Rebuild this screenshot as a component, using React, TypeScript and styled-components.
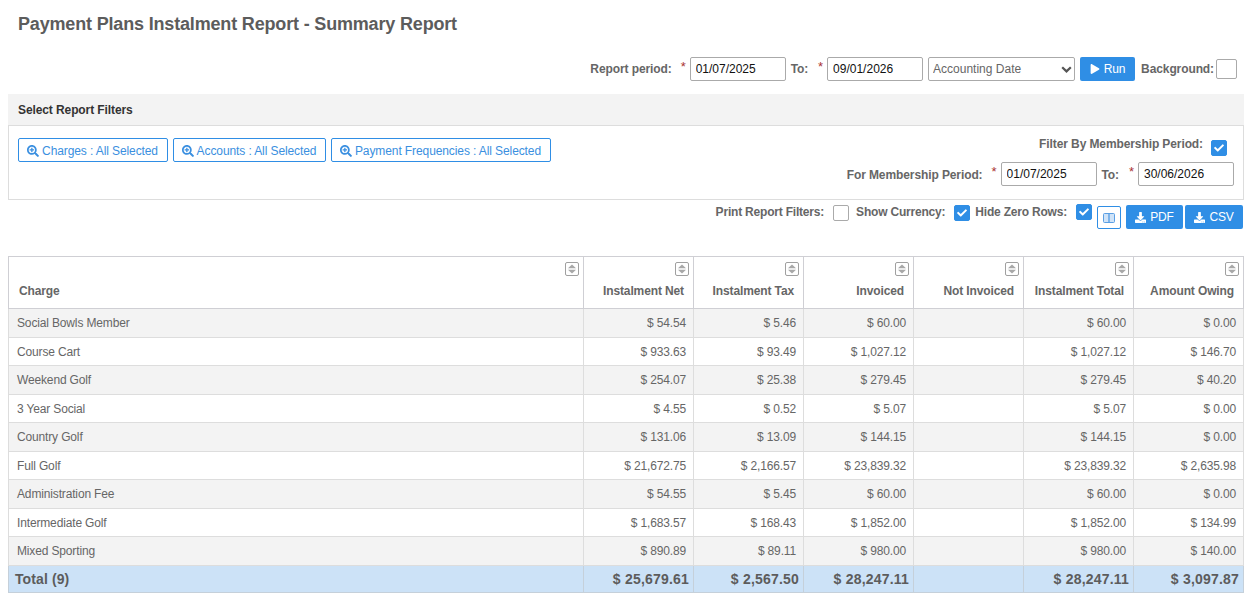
import React from 'react';
import styled, { createGlobalStyle } from 'styled-components';
import { FaSearchPlus, FaPlay, FaDownload, FaCheck } from 'react-icons/fa';

const Global = createGlobalStyle`
  html, body { margin: 0; padding: 0; background: #fff; }
  body { font-family: "Liberation Sans", Arial, sans-serif; font-size: 12px; color: #666; }
`;

const chevron = encodeURIComponent(
  '<svg xmlns="http://www.w3.org/2000/svg" width="11" height="7" viewBox="0 0 11 7"><path d="M1.2 1.2 L5.5 5.4 L9.8 1.2" fill="none" stroke="#555" stroke-width="2.2"/></svg>'
);

const Page = styled.div`
  width: 1251px;
  height: 598px;
  overflow: hidden;
  padding: 0 7px 0 8px;
  box-sizing: border-box;
`;
const Title = styled.h1`
  margin: 0;
  padding: 14px 0 0 10px;
  height: 57px;
  box-sizing: border-box;
  font-size: 18px;
  line-height: 21px;
  font-weight: 700;
  letter-spacing: -0.17px;
  color: #5c5c5c;
`;
const PeriodBar = styled.div`
  display: flex;
  justify-content: flex-end;
  align-items: center;
  height: 24px;
  padding-right: 7px;
`;
const Label = styled.label<{ $gap?: number }>`
  font-weight: 700;
  font-size: 12px;
  letter-spacing: -0.1px;
  line-height: 14px;
  color: #666;
  white-space: nowrap;
  margin-left: ${p => p.$gap ?? 0}px;
`;
const ToLabel = styled(Label)`
  margin-left: 5px;
  padding-right: 1px;
`;
const MembershipDateLabel = styled(Label)`
  margin-top: 2px;
`;
const MembershipToLabel = styled(ToLabel)`
  margin-top: 2px;
`;
const Star = styled.span`
  color: #a33;
  font-size: 13px;
  width: 6px;
  margin: -5px 3px 0 9px;
  line-height: 14px;
`;
const DateInput = styled.input`
  width: 96px;
  height: 24px;
  box-sizing: border-box;
  border: 1px solid #aaa;
  border-radius: 2px;
  padding: 0 5px;
  font: 12px "Liberation Sans", Arial, sans-serif;
  color: #111;
  background: #fff;
  outline: none;
`;
const Select = styled.select`
  width: 147px;
  height: 24px;
  margin-left: 5px;
  box-sizing: border-box;
  border: 1px solid #aaa;
  border-radius: 2px;
  padding: 0 0 0 4px;
  font: 12px "Liberation Sans", Arial, sans-serif;
  color: #666;
  appearance: none;
  background: #fff url("data:image/svg+xml,${chevron}") no-repeat right 2px center;
`;
const PrimaryButton = styled.button<{ $w: number; $ml?: number }>`
  display: inline-flex;
  align-items: center;
  justify-content: center;
  gap: 4px;
  width: ${p => p.$w}px;
  height: 24px;
  margin-left: ${p => p.$ml ?? 0}px;
  padding: 0;
  border: none;
  border-radius: 2px;
  background: #2f8ee5;
  color: #fff;
  letter-spacing: -0.15px;
  font-family: "Liberation Sans", Arial, sans-serif;
  font-size: 12px;
`;
const BackgroundBox = styled.span`
  width: 21px;
  height: 20px;
  margin-left: 2px;
  box-sizing: border-box;
  border: 1px solid #aaa;
  border-radius: 2px;
  background: #fff;
`;
const PanelHeader = styled.div`
  margin-top: 13px;
  height: 32px;
  width: 1236px;
  box-sizing: border-box;
  background: #f3f3f3;
  border-bottom: 1px solid #ddd;
  padding: 9px 0 0 10px;
  font-size: 12px;
  line-height: 14px;
  font-weight: 700;
  letter-spacing: -0.1px;
  color: #333;
`;
const PanelBody = styled.div`
  width: 1236px;
  height: 74px;
  box-sizing: border-box;
  border: 1px solid #ddd;
  border-top: none;
  display: flex;
  justify-content: space-between;
  padding: 12px 9px 0 9px;
`;
const FilterButtons = styled.div`
  display: flex;
  gap: 5px;
  align-items: flex-start;
`;
const FilterButton = styled.button<{ $w: number }>`
  display: inline-flex;
  align-items: center;
  justify-content: center;
  gap: 3px;
  width: ${p => p.$w}px;
  height: 24px;
  padding: 1px 1px 0 0;
  border: 1px solid #2f8ee5;
  border-radius: 2px;
  background: #fff;
  color: #3a8fe0;
  letter-spacing: -0.1px;
  font-family: "Liberation Sans", Arial, sans-serif;
  font-size: 12px;
`;
const MembershipColumn = styled.div`
  display: flex;
  flex-direction: column;
  align-items: flex-end;
`;
const MembershipCheckRow = styled.div`
  display: flex;
  align-items: flex-start;
  height: 17px;
  padding-right: 7px;
  gap: 8px;
`;
const MembershipLabel = styled(Label)`
  margin-top: -1px;
`;
const MembershipDates = styled.div`
  display: flex;
  align-items: center;
  margin-top: 7px;
`;
const Check = styled.span<{ $on?: boolean }>`
  display: inline-flex;
  align-items: center;
  justify-content: center;
  width: 16px;
  height: 16px;
  box-sizing: border-box;
  border-radius: 2px;
  border: 1px solid ${p => (p.$on ? '#2f8ee5' : '#aaa')};
  background: ${p => (p.$on ? '#2f8ee5' : '#fff')};
  color: #fff;
  font-size: 10px;
  flex: none;
`;
const MembershipCheck = styled(Check)`
  margin-top: 2px;
`;
const OptionsBar = styled.div`
  display: flex;
  justify-content: flex-end;
  height: 25px;
  margin-top: 4px;
  width: 1235px;
`;
const OptionLabel = styled(Label)`
  line-height: 16px;
  letter-spacing: -0.2px;
`;
const OptionCheck = styled(Check)<{ $left: number; $top?: number }>`
  margin: ${p => p.$top ?? 0}px 0 0 ${p => p.$left}px;
`;
const ColumnsButton = styled.button`
  width: 24px;
  height: 23px;
  margin: 2px 0 0 5px;
  padding: 0;
  display: inline-flex;
  align-items: center;
  justify-content: center;
  border: 1px solid #2f8ee5;
  border-radius: 2px;
  background: #fff;
`;
const ExportGroup = styled.div`
  display: flex;
  margin-left: 5px;
  gap: 2px;
  margin-top: 1px;
`;
const Table = styled.table`
  margin-top: 27px;
  width: 1235px;
  table-layout: fixed;
  border-collapse: collapse;
  font-size: 12px;
`;
const HeadCell = styled.th<{ $left?: boolean }>`
  height: 51px;
  padding: 0 9px 0 10px;
  border: 1px solid #cfcfd4;
  vertical-align: top;
  font-weight: 700;
  letter-spacing: -0.12px;
  color: #666;
  text-align: ${p => (p.$left ? 'left' : 'right')};
`;
const HeadStack = styled.div`
  display: flex;
  flex-direction: column;
  height: 51px;
  box-sizing: border-box;
  padding-top: 5px;
`;
const HeadText = styled.span`
  margin-top: 8px;
  line-height: 14px;
  white-space: nowrap;
`;
const SortBox = styled.svg`
  align-self: flex-end;
  margin-right: -5px;
  display: block;
  flex: none;
`;
const Row = styled.tr<{ $odd: boolean }>`
  background: ${p => (p.$odd ? '#f3f3f3' : '#fff')};
`;
const Cell = styled.td<{ $h: number }>`
  height: ${p => p.$h}px;
  padding: 0 7px 0 8px;
  border: 1px solid #ddd;
  text-align: right;
  color: #666;
  line-height: 14px;
  letter-spacing: -0.15px;
  box-sizing: border-box;
`;
const NameCell = styled(Cell)`
  text-align: left;
`;
const TotalRow = styled.tr`
  background: #cce2f7;
`;
const TotalCell = styled.td`
  height: 27px;
  padding: 0 4px 0 8px;
  border: 1px solid #c5d0da;
  font-size: 14px;
  font-weight: 700;
  letter-spacing: 0.2px;
  color: #5c5c5c;
  text-align: right;
  box-sizing: border-box;
`;
const TotalName = styled(TotalCell)`
  text-align: left;
  padding-left: 6px;
  letter-spacing: 0.1px;
`;

const SortIcon = () => (
  <SortBox width="14" height="14" viewBox="0 0 14 14">
    <rect x="0.5" y="0.5" width="13" height="13" rx="1.5" fill="#fff" stroke="#a0a0a0" />
    <path d="M7 2.4 L11 6.2 H3 Z" fill="#a8a8a8" />
    <path d="M7 11.6 L11 7.8 H3 Z" fill="#a8a8a8" />
  </SortBox>
);

const heads = ['Instalment Net', 'Instalment Tax', 'Invoiced', 'Not Invoiced', 'Instalment Total', 'Amount Owing'];
const rows: [string, string, string, string, string, string][] = [
  ['Social Bowls Member', '$ 54.54', '$ 5.46', '$ 60.00', '$ 60.00', '$ 0.00'],
  ['Course Cart', '$ 933.63', '$ 93.49', '$ 1,027.12', '$ 1,027.12', '$ 146.70'],
  ['Weekend Golf', '$ 254.07', '$ 25.38', '$ 279.45', '$ 279.45', '$ 40.20'],
  ['3 Year Social', '$ 4.55', '$ 0.52', '$ 5.07', '$ 5.07', '$ 0.00'],
  ['Country Golf', '$ 131.06', '$ 13.09', '$ 144.15', '$ 144.15', '$ 0.00'],
  ['Full Golf', '$ 21,672.75', '$ 2,166.57', '$ 23,839.32', '$ 23,839.32', '$ 2,635.98'],
  ['Administration Fee', '$ 54.55', '$ 5.45', '$ 60.00', '$ 60.00', '$ 0.00'],
  ['Intermediate Golf', '$ 1,683.57', '$ 168.43', '$ 1,852.00', '$ 1,852.00', '$ 134.99'],
  ['Mixed Sporting', '$ 890.89', '$ 89.11', '$ 980.00', '$ 980.00', '$ 140.00'],
];
const rowHeights = [29, 28, 29, 28, 29, 28, 29, 28, 29];

export default function App() {
  return (
    <Page>
      <Global />
      <Title>Payment Plans Instalment Report - Summary Report</Title>
      <PeriodBar>
        <Label>Report period:</Label>
        <Star>*</Star>
        <DateInput defaultValue="01/07/2025" />
        <ToLabel>To:</ToLabel>
        <Star>*</Star>
        <DateInput defaultValue="09/01/2026" />
        <Select defaultValue="Accounting Date">
          <option>Accounting Date</option>
        </Select>
        <PrimaryButton $w={55} $ml={5}><FaPlay size={10} />Run</PrimaryButton>
        <Label $gap={6}>Background:</Label>
        <BackgroundBox />
      </PeriodBar>
      <PanelHeader>Select Report Filters</PanelHeader>
      <PanelBody>
        <FilterButtons>
          <FilterButton $w={150}><FaSearchPlus size={12} />Charges : All Selected</FilterButton>
          <FilterButton $w={153}><FaSearchPlus size={12} />Accounts : All Selected</FilterButton>
          <FilterButton $w={220}><FaSearchPlus size={12} />Payment Frequencies : All Selected</FilterButton>
        </FilterButtons>
        <MembershipColumn>
          <MembershipCheckRow>
            <MembershipLabel>Filter By Membership Period:</MembershipLabel>
            <MembershipCheck $on><FaCheck /></MembershipCheck>
          </MembershipCheckRow>
          <MembershipDates>
            <MembershipDateLabel>For Membership Period:</MembershipDateLabel>
            <Star>*</Star>
            <DateInput defaultValue="01/07/2025" />
            <MembershipToLabel>To:</MembershipToLabel>
            <Star>*</Star>
            <DateInput defaultValue="30/06/2026" />
          </MembershipDates>
        </MembershipColumn>
      </PanelBody>
      <OptionsBar>
        <OptionLabel>Print Report Filters:</OptionLabel>
        <OptionCheck $left={9} $top={1} />
        <OptionLabel $gap={7}>Show Currency:</OptionLabel>
        <OptionCheck $left={9} $top={1} $on><FaCheck /></OptionCheck>
        <OptionLabel $gap={5}>Hide Zero Rows:</OptionLabel>
        <OptionCheck $left={9} $on><FaCheck /></OptionCheck>
        <ColumnsButton>
          <svg width="12" height="12" viewBox="0 0 12 12">
            <rect x="0.5" y="1.5" width="11" height="9" rx="1" fill="#cfe3f8" stroke="#5a9fe4" />
            <path d="M6 1.5 V10.5" stroke="#5a9fe4" strokeWidth="1.4" />
          </svg>
        </ColumnsButton>
        <ExportGroup>
          <PrimaryButton $w={57}><FaDownload size={11} />PDF</PrimaryButton>
          <PrimaryButton $w={58}><FaDownload size={11} />CSV</PrimaryButton>
        </ExportGroup>
      </OptionsBar>
      <Table>
        <colgroup>
          <col style={{ width: 575 }} />
          {heads.map(h => <col key={h} style={{ width: 110 }} />)}
        </colgroup>
        <thead>
          <tr>
            <HeadCell $left>
              <HeadStack><SortIcon /><HeadText>Charge</HeadText></HeadStack>
            </HeadCell>
            {heads.map(h => (
              <HeadCell key={h}>
                <HeadStack><SortIcon /><HeadText>{h}</HeadText></HeadStack>
              </HeadCell>
            ))}
          </tr>
        </thead>
        <tbody>
          {rows.map((r, i) => (
            <Row key={r[0]} $odd={i % 2 === 0}>
              <NameCell $h={rowHeights[i]}>{r[0]}</NameCell>
              <Cell $h={rowHeights[i]}>{r[1]}</Cell>
              <Cell $h={rowHeights[i]}>{r[2]}</Cell>
              <Cell $h={rowHeights[i]}>{r[3]}</Cell>
              <Cell $h={rowHeights[i]} />
              <Cell $h={rowHeights[i]}>{r[4]}</Cell>
              <Cell $h={rowHeights[i]}>{r[5]}</Cell>
            </Row>
          ))}
          <TotalRow>
            <TotalName>Total (9)</TotalName>
            <TotalCell>$ 25,679.61</TotalCell>
            <TotalCell>$ 2,567.50</TotalCell>
            <TotalCell>$ 28,247.11</TotalCell>
            <TotalCell />
            <TotalCell>$ 28,247.11</TotalCell>
            <TotalCell>$ 3,097.87</TotalCell>
          </TotalRow>
        </tbody>
      </Table>
    </Page>
  );
}
